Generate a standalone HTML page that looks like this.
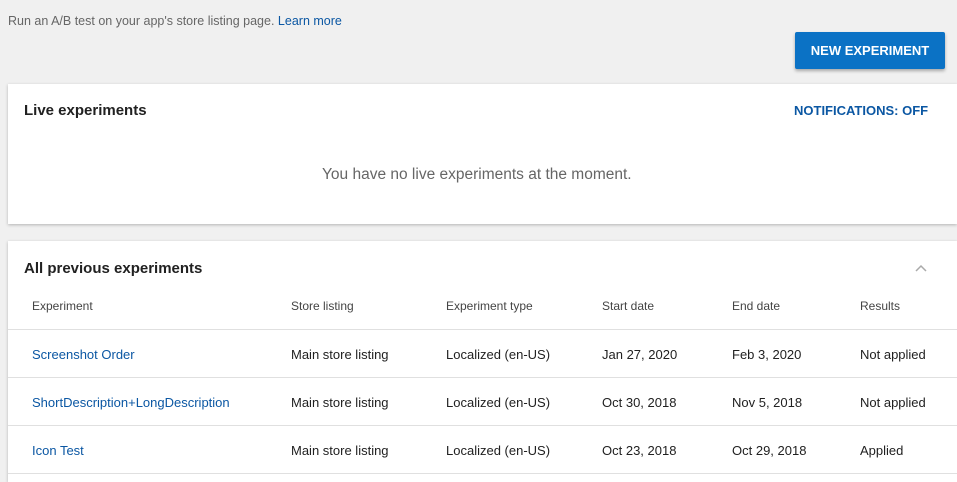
<!DOCTYPE html>
<html><head><meta charset="utf-8"><style>
*{margin:0;padding:0;box-sizing:border-box}
html{width:957px;height:482px;overflow:hidden}
body{width:957px;height:482px;overflow:hidden;background:#f0f0f0;font-family:"Liberation Sans",sans-serif;color:#212121;position:relative}
.a{position:absolute;white-space:nowrap}
.blue{color:#0b57a3}
.card{position:absolute;left:8px;width:949px;background:#fff;box-shadow:0 1px 3px rgba(0,0,0,.25)}
.btn{position:absolute;left:795px;top:32px;width:150px;height:37px;background:#0b72c5;color:#fff;font-weight:bold;font-size:13px;line-height:37px;text-align:center;box-shadow:0 2px 3px rgba(0,0,0,.3);border-radius:2px}
.row{position:absolute;left:0;width:949px;height:48px;border-top:1px solid #e0e0e0;font-size:13px}
.row span{position:absolute;top:17px;white-space:nowrap}
.h span{color:#444;font-size:12px;top:18px}
</style></head><body>
<div class="a" style="left:8px;top:14px;font-size:12.5px;color:#666">Run an A/B test on your app's store listing page. <span class="blue">Learn more</span></div>
<div class="btn">NEW EXPERIMENT</div>
<div class="card" style="top:84px;height:140px">
<div class="a" style="left:16px;top:18px;font-size:15px;font-weight:bold;color:#212121">Live experiments</div>
<div class="a blue" style="left:786px;top:19px;font-size:13px;font-weight:bold">NOTIFICATIONS: OFF</div>
<div class="a" style="left:314px;top:82px;font-size:15.5px;color:#666">You have no live experiments at the moment.</div>
</div>
<div class="card" style="top:241px;height:241px;overflow:hidden">
<div class="a" style="left:16px;top:19px;font-size:15px;font-weight:bold">All previous experiments</div>
<svg class="a" style="left:906px;top:22px" width="14" height="10"><path d="M2 8 L7 3 L12 8" stroke="#aaa" stroke-width="1.5" fill="none"/></svg>
<div class="row h" style="top:40px;border-top:none"><span style="left:24px">Experiment</span><span style="left:283px">Store listing</span><span style="left:438px">Experiment type</span><span style="left:594px">Start date</span><span style="left:724px">End date</span><span style="left:852px">Results</span></div>
<div class="row" style="top:88px"><span class="blue" style="left:24px">Screenshot Order</span><span style="left:283px">Main store listing</span><span style="left:438px">Localized (en-US)</span><span style="left:594px">Jan 27, 2020</span><span style="left:724px">Feb 3, 2020</span><span style="left:852px">Not applied</span></div>
<div class="row" style="top:136px"><span class="blue" style="left:24px">ShortDescription+LongDescription</span><span style="left:283px">Main store listing</span><span style="left:438px">Localized (en-US)</span><span style="left:594px">Oct 30, 2018</span><span style="left:724px">Nov 5, 2018</span><span style="left:852px">Not applied</span></div>
<div class="row" style="top:184px;height:49px;border-bottom:1px solid #e0e0e0"><span class="blue" style="left:24px">Icon Test</span><span style="left:283px">Main store listing</span><span style="left:438px">Localized (en-US)</span><span style="left:594px">Oct 23, 2018</span><span style="left:724px">Oct 29, 2018</span><span style="left:852px">Applied</span></div>
</div>
</body></html>
